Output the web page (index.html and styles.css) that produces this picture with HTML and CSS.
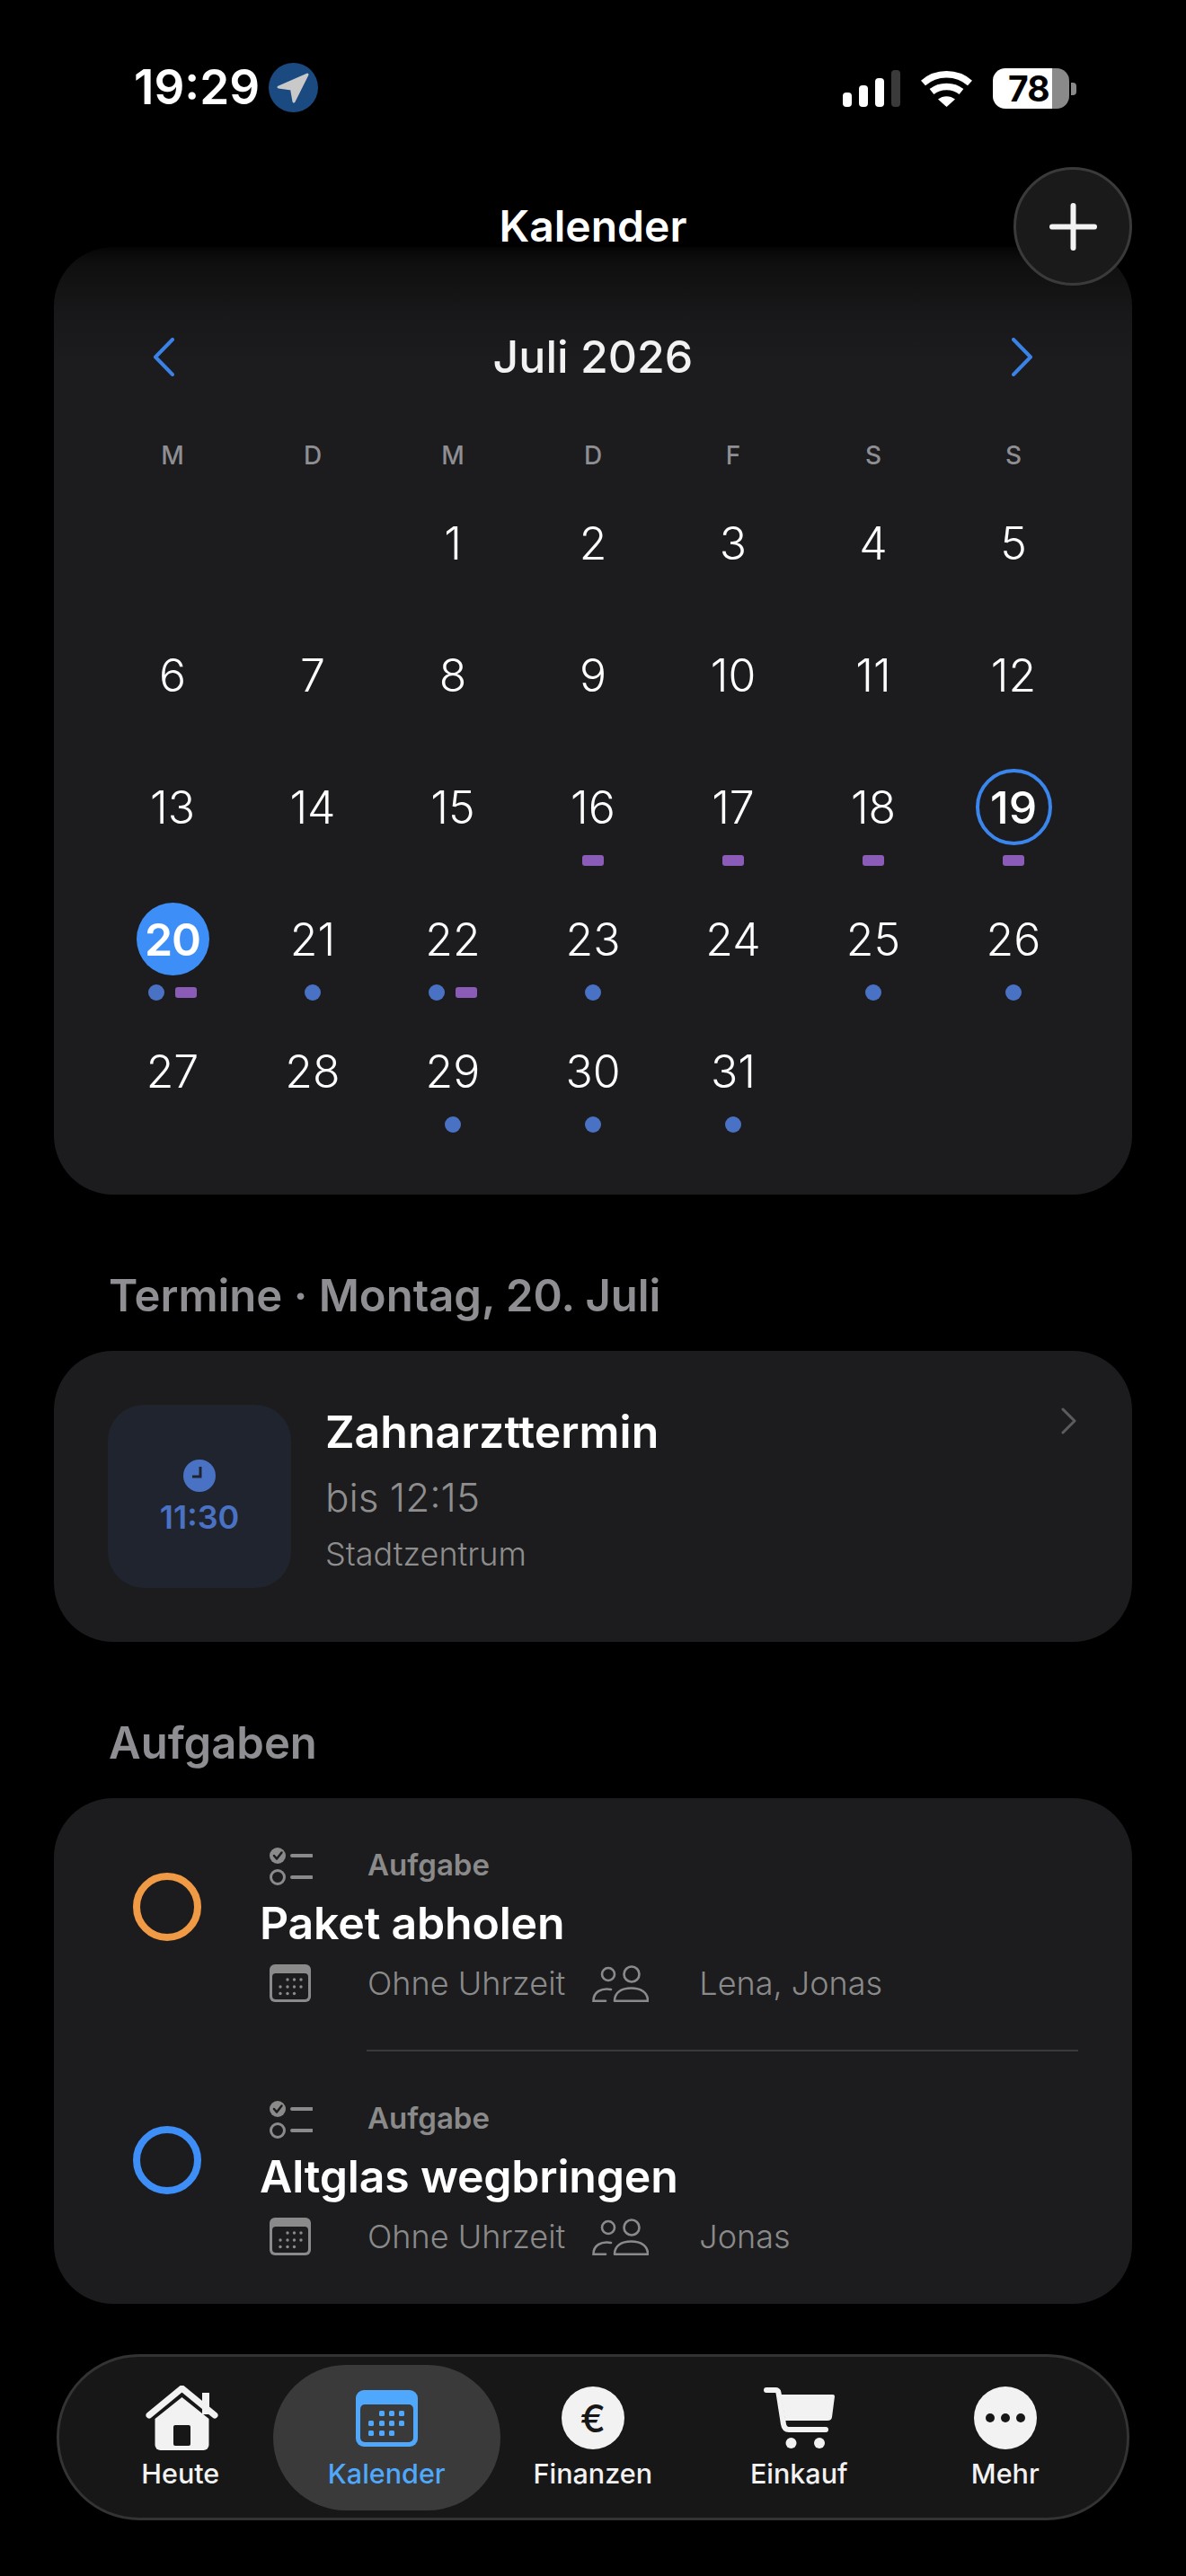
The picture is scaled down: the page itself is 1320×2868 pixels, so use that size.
FILE: index.html
```html
<!DOCTYPE html>
<html lang="de">
  <head>
    <meta charset="UTF-8" />
    <meta name="viewport" content="width=device-width, initial-scale=1.0" />
    <title>Kalender</title>
    <link rel="stylesheet" href="styles.css">
  </head>
  <body>
    <svg class="sprites" width="0" height="0">
      <symbol id="icon-checklist" viewBox="0 0 48 42">
        <circle cx="9" cy="9" r="9" fill="currentColor" />
        <path d="M5 9l3 3.500 5.500-7" fill="none" stroke="#1c1c1e" stroke-width="2.500" stroke-linecap="round" stroke-linejoin="round" />
        <circle cx="9" cy="33" r="7.500" fill="none" stroke="currentColor" stroke-width="3" />
        <path d="M25 9h22M25 33h22" stroke="currentColor" stroke-width="4" stroke-linecap="round" />
      </symbol>
      <symbol id="icon-cal-small" viewBox="0 0 46 42">
        <rect width="46" height="42" rx="6" fill="currentColor" />
        <rect x="3" y="10" width="40" height="29" rx="4" fill="#1c1c1e" />
        <g fill="currentColor">
          <circle cx="20" cy="17" r="1.700" /><circle cx="27.500" cy="17" r="1.700" /><circle cx="35" cy="17" r="1.700" />
          <circle cx="12" cy="25" r="1.700" /><circle cx="20" cy="25" r="1.700" /><circle cx="27.500" cy="25" r="1.700" /><circle cx="35" cy="25" r="1.700" />
          <circle cx="12" cy="32.500" r="1.700" /><circle cx="20" cy="32.500" r="1.700" /><circle cx="27.500" cy="32.500" r="1.700" />
        </g>
      </symbol>
      <symbol id="icon-people" viewBox="0 0 63 42">
        <g fill="none" stroke="currentColor" stroke-width="2.600">
          <circle cx="18" cy="11" r="7" />
          <circle cx="44" cy="11" r="8.500" />
          <path d="M21 28C10 26 1.500 31 1.500 40.700H15" stroke-linecap="round" />
          <path d="M25 40.700C25 31 33 26.500 43.500 26.500S62 31 62 40.700Z" stroke-linejoin="round" />
        </g>
      </symbol>
    </svg>

    <!-- Status bar -->
    <div class="status-bar">
      <div class="status-left">
        <span class="clock">19:29</span>
        <svg class="location" width="55" height="55" viewBox="0 0 55 55">
          <circle cx="27.500" cy="27.500" r="27.500" fill="#1a4a80" />
          <path d="M43 13L11 27 25.500 29 28 43Z" fill="#c9c9c9" stroke="#c9c9c9" stroke-width="3" stroke-linejoin="round" />
        </svg>
      </div>
      <div class="status-right">
        <div class="signal">
          <span class="bar bar-1"></span>
          <span class="bar bar-2"></span>
          <span class="bar bar-3"></span>
          <span class="bar bar-4"></span>
        </div>
        <svg width="57" height="41" viewBox="0 0 57 41">
          <g fill="none" stroke="#fff" stroke-width="7.500">
            <path d="M2.500 14.500C17 1.500 40 1.500 54.500 14.500" />
            <path d="M12 24C21 16.500 36 16.500 45 24" />
          </g>
          <path d="M19 32.500C24.500 28 32.500 28 38 32.500L28.500 41Z" fill="#fff" />
        </svg>
        <div class="battery">
          <div class="battery-body">78</div>
          <span class="battery-nub"></span>
        </div>
      </div>
    </div>

    <!-- Header -->
    <div class="header">
      <h1>Kalender</h1>
      <button class="add-btn">
        <svg width="53" height="53" viewBox="0 0 53 53">
          <path d="M26.500 3v47M3 26.500h47" stroke="#f2f2f2" stroke-width="6" stroke-linecap="round" />
        </svg>
      </button>
    </div>

    <!-- Calendar -->
    <div class="card calendar">
      <div class="month-nav">
        <svg width="24" height="43" viewBox="0 0 24 43">
          <path d="M22 2L3 21.500 22 41" fill="none" stroke="#3b82e6" stroke-width="4" stroke-linecap="round" stroke-linejoin="round" />
        </svg>
        <span class="month">Juli 2026</span>
        <svg width="24" height="43" viewBox="0 0 24 43">
          <path d="M2 2L21 21.500 2 41" fill="none" stroke="#3b82e6" stroke-width="4" stroke-linecap="round" stroke-linejoin="round" />
        </svg>
      </div>

      <div class="weekdays">
        <span>M</span><span>D</span><span>M</span><span>D</span><span>F</span><span>S</span><span>S</span>
      </div>

      <div class="days">
        <div class="day"></div>
        <div class="day"></div>
        <div class="day"><span class="num">1</span></div>
        <div class="day"><span class="num">2</span></div>
        <div class="day"><span class="num">3</span></div>
        <div class="day"><span class="num">4</span></div>
        <div class="day"><span class="num">5</span></div>

        <div class="day"><span class="num">6</span></div>
        <div class="day"><span class="num">7</span></div>
        <div class="day"><span class="num">8</span></div>
        <div class="day"><span class="num">9</span></div>
        <div class="day"><span class="num">10</span></div>
        <div class="day"><span class="num">11</span></div>
        <div class="day"><span class="num">12</span></div>

        <div class="day"><span class="num">13</span></div>
        <div class="day"><span class="num">14</span></div>
        <div class="day"><span class="num">15</span></div>
        <div class="day"><span class="num">16</span><div class="marks"><i class="tag"></i></div></div>
        <div class="day"><span class="num">17</span><div class="marks"><i class="tag"></i></div></div>
        <div class="day"><span class="num">18</span><div class="marks"><i class="tag"></i></div></div>
        <div class="day"><span class="num selected">19</span><div class="marks"><i class="tag"></i></div></div>

        <div class="day"><span class="num today">20</span><div class="marks"><i class="dot"></i><i class="tag"></i></div></div>
        <div class="day"><span class="num">21</span><div class="marks"><i class="dot"></i></div></div>
        <div class="day"><span class="num">22</span><div class="marks"><i class="dot"></i><i class="tag"></i></div></div>
        <div class="day"><span class="num">23</span><div class="marks"><i class="dot"></i></div></div>
        <div class="day"><span class="num">24</span></div>
        <div class="day"><span class="num">25</span><div class="marks"><i class="dot"></i></div></div>
        <div class="day"><span class="num">26</span><div class="marks"><i class="dot"></i></div></div>

        <div class="day"><span class="num">27</span></div>
        <div class="day"><span class="num">28</span></div>
        <div class="day"><span class="num">29</span><div class="marks"><i class="dot"></i></div></div>
        <div class="day"><span class="num">30</span><div class="marks"><i class="dot"></i></div></div>
        <div class="day"><span class="num">31</span><div class="marks"><i class="dot"></i></div></div>
      </div>
    </div>

    <!-- Appointments -->
    <h2 class="section-title">Termine · Montag, 20. Juli</h2>
    <div class="card event">
      <div class="event-time">
        <svg width="36" height="36" viewBox="0 0 36 36">
          <circle cx="18" cy="18" r="18" fill="#4a72c4" />
          <path d="M19 8v11h-9" fill="none" stroke="#20242e" stroke-width="3" />
        </svg>
        <span>11:30</span>
      </div>
      <div class="event-info">
        <div class="event-name">Zahnarzttermin</div>
        <div class="event-until">bis 12:15</div>
        <div class="event-place">Stadtzentrum</div>
      </div>
      <svg class="event-arrow" width="18" height="32" viewBox="0 0 18 32">
        <path d="M3 3l13 13L3 29" fill="none" stroke="#5c5c60" stroke-width="3" stroke-linecap="round" stroke-linejoin="round" />
      </svg>
    </div>

    <!-- Tasks -->
    <h2 class="section-title">Aufgaben</h2>
    <div class="card tasks">
      <div class="task">
        <span class="ring ring-orange"></span>
        <div class="task-body">
          <div class="task-line">
            <svg class="task-icon list-icon" width="48" height="42"><use href="#icon-checklist" /></svg>
            <span class="task-type">Aufgabe</span>
          </div>
          <div class="task-title">Paket abholen</div>
          <div class="task-line">
            <svg class="task-icon cal-icon" width="46" height="42"><use href="#icon-cal-small" /></svg>
            <span class="task-meta">Ohne Uhrzeit</span>
            <svg class="people-icon" width="63" height="42"><use href="#icon-people" /></svg>
            <span class="task-meta">Lena, Jonas</span>
          </div>
        </div>
      </div>
      <div class="divider"></div>
      <div class="task">
        <span class="ring ring-blue"></span>
        <div class="task-body">
          <div class="task-line">
            <svg class="task-icon list-icon" width="48" height="42"><use href="#icon-checklist" /></svg>
            <span class="task-type">Aufgabe</span>
          </div>
          <div class="task-title">Altglas wegbringen</div>
          <div class="task-line">
            <svg class="task-icon cal-icon" width="46" height="42"><use href="#icon-cal-small" /></svg>
            <span class="task-meta">Ohne Uhrzeit</span>
            <svg class="people-icon" width="63" height="42"><use href="#icon-people" /></svg>
            <span class="task-meta">Jonas</span>
          </div>
        </div>
      </div>
    </div>

    <!-- Tab bar -->
    <div class="tab-bar">
      <div class="tab">
        <div class="tab-icon home-icon">
          <svg width="81" height="72" viewBox="0 0 81 72">
            <path d="M63 8h8v24h-8z" fill="#f2f2f2" />
            <path d="M4 33L40.500 3 77 33" fill="none" stroke="#f2f2f2" stroke-width="7" stroke-linecap="round" stroke-linejoin="round" />
            <path d="M40.500 13L70.500 37v29a6 6 0 0 1-6 6h-48a6 6 0 0 1-6-6V37Z" fill="#f2f2f2" />
            <rect x="31" y="44" width="19" height="23" rx="2" fill="#171717" />
          </svg>
        </div>
        <span>Heute</span>
      </div>
      <div class="tab active">
        <div class="tab-icon">
          <svg width="69" height="63" viewBox="0 0 69 63">
            <rect width="69" height="63" rx="9" fill="#4fa8fb" />
            <rect x="5" y="16" width="59" height="42" rx="5" fill="#3a3a3a" />
            <g fill="#4fa8fb">
              <rect x="26" y="23" width="6" height="6" rx="1.500" /><rect x="37" y="23" width="6" height="6" rx="1.500" /><rect x="48" y="23" width="6" height="6" rx="1.500" />
              <rect x="14" y="34" width="6" height="6" rx="1.500" /><rect x="26" y="34" width="6" height="6" rx="1.500" /><rect x="37" y="34" width="6" height="6" rx="1.500" /><rect x="48" y="34" width="6" height="6" rx="1.500" />
              <rect x="14" y="45" width="6" height="6" rx="1.500" /><rect x="26" y="45" width="6" height="6" rx="1.500" /><rect x="37" y="45" width="6" height="6" rx="1.500" />
            </g>
          </svg>
        </div>
        <span>Kalender</span>
      </div>
      <div class="tab">
        <div class="tab-icon">
          <div class="round-icon euro">€</div>
        </div>
        <span>Finanzen</span>
      </div>
      <div class="tab">
        <div class="tab-icon">
          <svg width="79" height="68" viewBox="0 0 79 68">
            <path d="M3 3h10q3 0 3.500 3L22 41q1 6 6 6h41" fill="none" stroke="#f2f2f2" stroke-width="6" stroke-linecap="round" stroke-linejoin="round" />
            <path d="M19 8h58q2 0 2 2l-3 23q-.5 4-5 4H24Z" fill="#f2f2f2" />
            <circle cx="30.500" cy="62" r="6" fill="#f2f2f2" />
            <circle cx="62" cy="62" r="6" fill="#f2f2f2" />
          </svg>
        </div>
        <span>Einkauf</span>
      </div>
      <div class="tab">
        <div class="tab-icon">
          <div class="round-icon more"><i></i><i></i><i></i></div>
        </div>
        <span>Mehr</span>
      </div>
    </div>
  </body>
</html>
```

FILE: styles.css
```css
* {
  margin: 0;
  padding: 0;
  box-sizing: border-box;
}

body {
  font-family: Inter, "Noto Sans", sans-serif;
  background-color: #000;
  color: #fff;
  width: 1320px;
  height: 2868px;
  overflow: hidden;
}

.sprites {
  position: absolute;
}

/* Status bar */
.status-bar {
  height: 186px;
  padding: 70px 122px 0 149px;
  display: flex;
  justify-content: space-between;
  align-items: flex-start;
}

.status-left {
  display: flex;
  align-items: center;
  gap: 10px;
}

.clock {
  font-size: 53px;
  font-weight: 600;
  line-height: 55px;
}

.status-right {
  display: flex;
  align-items: flex-end;
  gap: 23px;
  height: 49px;
}

.signal {
  display: flex;
  align-items: flex-end;
  gap: 8px;
}

.bar {
  width: 10px;
  border-radius: 4px;
  background-color: #fff;
}

.bar-1 { height: 16px; }
.bar-2 { height: 24px; }
.bar-3 { height: 32px; }
.bar-4 { height: 41px; background-color: #3a3a3a; }

.battery {
  display: flex;
  align-items: center;
  gap: 2px;
  margin-bottom: -2px;
}

.battery-body {
  width: 85px;
  height: 45px;
  border-radius: 14px;
  background: linear-gradient(to right, #fff 78%, #8a8a8a 78%);
  color: #000;
  font-size: 39px;
  font-weight: 700;
  line-height: 45px;
  padding-left: 17px;
  letter-spacing: -1px;
}

.battery-nub {
  width: 6px;
  height: 14px;
  border-radius: 0 4px 4px 0;
  background-color: #8a8a8a;
}

/* Header */
.header {
  height: 89px;
  position: relative;
  text-align: center;
}

h1 {
  font-size: 48px;
  font-weight: 600;
  line-height: 132px;
  position: relative;
  z-index: 2;
}

.add-btn {
  position: absolute;
  top: 0;
  right: 60px;
  z-index: 2;
  width: 132px;
  height: 132px;
  border-radius: 50%;
  border: 3px solid #3a3a3a;
  background-color: #1a1a1a;
  display: flex;
  align-items: center;
  justify-content: center;
}

/* Cards */
.card {
  margin: 0 60px;
  width: 1200px;
  background-color: #1c1c1e;
  border-radius: 66px;
}

.calendar {
  height: 1055px;
  padding: 98px 54px 0;
  background: linear-gradient(to bottom, #050505 0, #0f0f0f 18px, #18181a 75px, #1c1c1e 130px);
}

.month-nav {
  height: 48px;
  padding: 0 56px;
  display: flex;
  align-items: center;
  justify-content: space-between;
}

.month {
  font-size: 50px;
  font-weight: 500;
  color: #f2f2f2;
}

.weekdays {
  margin-top: 66px;
  height: 40px;
  display: grid;
  grid-template-columns: repeat(7, 156px);
  text-align: center;
  font-size: 28px;
  font-weight: 500;
  line-height: 40px;
  color: #8e8e93;
}

.days {
  margin-top: 35px;
  display: grid;
  grid-template-columns: repeat(7, 156px);
  grid-auto-rows: 147px;
}

.day {
  display: flex;
  flex-direction: column;
  align-items: center;
}

.num {
  width: 85px;
  height: 85px;
  border-radius: 50%;
  display: flex;
  align-items: center;
  justify-content: center;
  font-size: 50px;
  font-weight: 350;
}

.selected {
  border: 4px solid #3a86ec;
  font-weight: 500;
}

.today {
  width: 81px;
  height: 81px;
  margin: 2px 0;
  background-color: #3d8ff7;
  font-weight: 600;
  letter-spacing: -1px;
}

.marks {
  margin-top: 8px;
  height: 18px;
  display: flex;
  align-items: center;
  gap: 12px;
}

.dot {
  width: 18px;
  height: 18px;
  border-radius: 50%;
  background-color: #4a72c4;
}

.tag {
  width: 24px;
  height: 12px;
  border-radius: 3px;
  background-color: #8a5cb8;
}

.section-title {
  margin: 83px 0 31px 121px;
  height: 60px;
  font-size: 49px;
  font-weight: 600;
  line-height: 60px;
  color: #8e8e93;
}

/* Appointment */
.event {
  height: 324px;
  padding: 60px 60px 0;
  display: flex;
  align-items: flex-start;
}

.event-time {
  width: 204px;
  height: 204px;
  border-radius: 40px;
  background-color: #20242e;
  color: #4a72c4;
  display: flex;
  flex-direction: column;
  align-items: center;
  padding-top: 61px;
  gap: 9px;
}

.event-time span {
  font-size: 36px;
  font-weight: 600;
  line-height: 38px;
}

.event-info {
  margin-left: 38px;
  flex: 1;
}

.event-name {
  font-size: 50px;
  font-weight: 600;
  line-height: 60px;
}

.event-until {
  margin-top: 13px;
  font-size: 44px;
  font-weight: 350;
  line-height: 60px;
  color: #8e8e8e;
}

.event-place {
  margin-top: 10px;
  font-size: 36px;
  font-weight: 350;
  line-height: 46px;
  color: #8e8e8e;
}

.event-arrow {
  margin-top: 2px;
  margin-right: 2px;
}

/* Tasks */
.tasks {
  height: 563px;
}

.task {
  height: 280px;
  padding: 55px 60px 0 88px;
  display: flex;
  align-items: flex-start;
}

.ring {
  width: 76px;
  height: 76px;
  margin-top: 28px;
  border-radius: 50%;
  border: 8px solid;
  flex-shrink: 0;
}

.ring-orange { border-color: #f19a45; }
.ring-blue { border-color: #3d8ff7; }

.task-body {
  margin-left: 65px;
}

.task-line {
  height: 42px;
  display: flex;
  align-items: center;
  padding-left: 11px;
  color: #8a8a8a;
}

.task-icon {
  flex-shrink: 0;
}

.list-icon {
  margin-right: 61px;
}

.cal-icon {
  margin-right: 63px;
}

.task-type {
  margin-top: -5px;
  font-size: 33px;
  font-weight: 600;
  color: #8a8a8a;
}

.task-title {
  margin-top: 14px;
  margin-bottom: 18px;
  height: 56px;
  font-size: 50px;
  font-weight: 600;
  line-height: 56px;
  letter-spacing: -0.2px;
}

.task-meta {
  font-size: 36px;
  font-weight: 350;
  color: #8a8a8a;
}

.people-icon {
  margin: 0 56px 0 30px;
}

.divider {
  margin: 0 60px 0 348px;
  height: 2px;
  background-color: #3a3a3c;
}

/* Tab bar */
.tab-bar {
  margin: 56px 0 0 63px;
  width: 1194px;
  height: 185px;
  padding: 9px 20px;
  border-radius: 92px;
  border: 3px solid #333;
  background-color: #171717;
  display: flex;
}

.tab {
  width: 229.500px;
  flex-shrink: 0;
  display: flex;
  flex-direction: column;
  align-items: center;
  padding-top: 21px;
  color: #f2f2f2;
  font-size: 30.500px;
  font-weight: 450;
}

.tab.active {
  width: 253px;
  margin: 0 -11.750px;
  height: 162px;
  border-radius: 81px;
  background-color: #3a3a3a;
  color: #4fa8fb;
  font-weight: 550;
}

.tab-icon {
  height: 76px;
  display: flex;
  align-items: center;
  justify-content: center;
}

.home-icon {
  margin-left: 4px;
}

.tab span {
  margin-top: 6px;
  line-height: 36px;
}

.round-icon {
  width: 70px;
  height: 70px;
  border-radius: 50%;
  background-color: #f2f2f2;
  display: flex;
  align-items: center;
  justify-content: center;
}

.euro {
  color: #171717;
  font-size: 42px;
  font-weight: 500;
}

.more {
  gap: 7px;
}

.more i {
  width: 10px;
  height: 10px;
  border-radius: 50%;
  background-color: #171717;
}
```
